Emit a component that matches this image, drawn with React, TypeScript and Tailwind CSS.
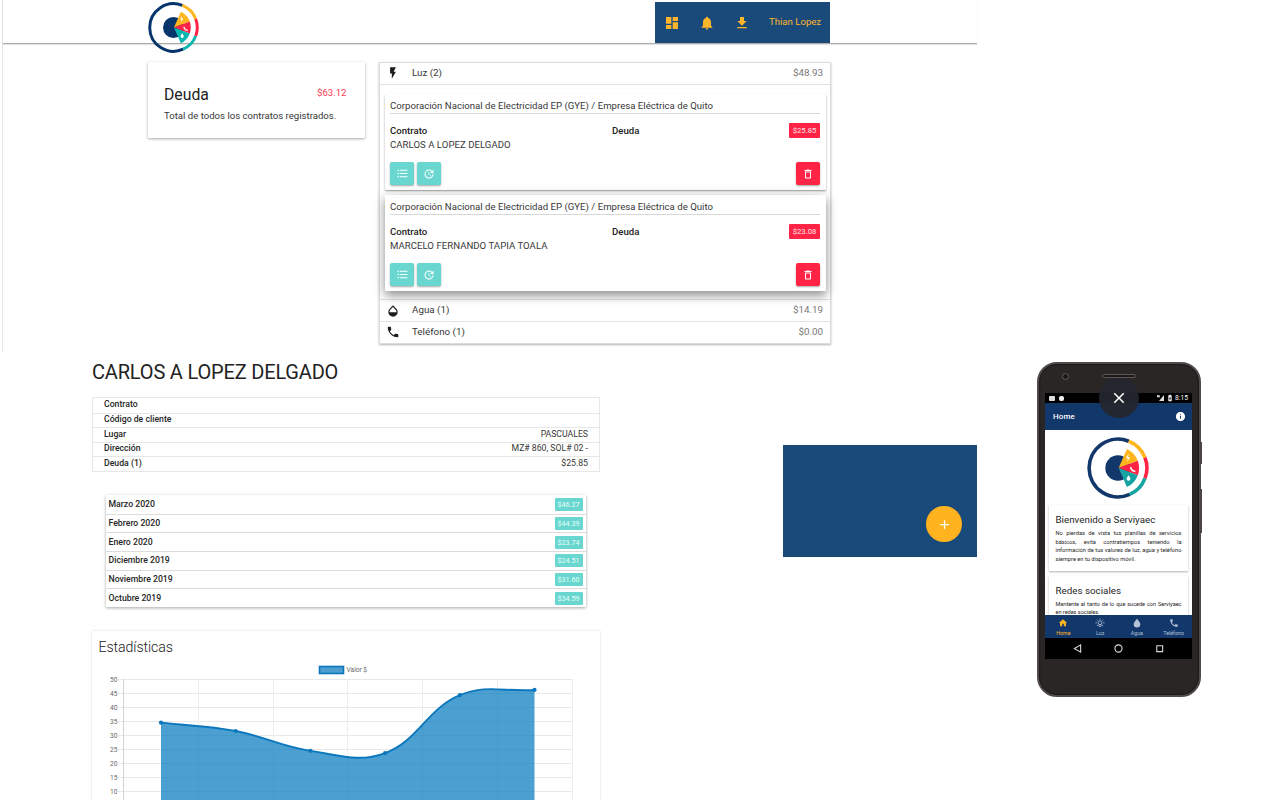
import React from "react";
import {
  MdAdd,
  MdBatteryChargingFull,
  MdClose,
  MdDashboard,
  MdDeleteOutline,
  MdFileDownload,
  MdFlashOn,
  MdFormatListBulleted,
  MdHome,
  MdInfo,
  MdNotifications,
  MdOpacity,
  MdPhone,
  MdUpdate,
} from "react-icons/md";

function polar(r: number, deg: number) {
  const a = (deg * Math.PI) / 180;
  return `${(50 + r * Math.cos(a)).toFixed(2)} ${(50 + r * Math.sin(a)).toFixed(2)}`;
}
const arc = (r: number, a: number, b: number, large = 0) =>
  `M${polar(r, a)}A${r} ${r} 0 ${large} 1 ${polar(r, b)}`;
const wedge = (r: number, a: number, b: number) =>
  `M51 50L${polar(r, a)}A${r} ${r} 0 0 1 ${polar(r, b)}Z`;

function Logo({ className, navy, teal }: { className: string; navy: string; teal: string }) {
  return (
    <svg viewBox="0 0 100 100" className={className} fill="none">
      <g strokeWidth="5.8">
        <path d={arc(46.6, 66, 292, 1)} stroke={navy} />
        <path d={arc(46.6, -68, -21)} stroke="#ffb61e" />
        <path d={arc(46.6, -21, 21)} stroke="#ff2445" />
        <path d={arc(46.6, 21, 66)} stroke={teal} />
      </g>
      <circle cx="50" cy="50" r="20.5" fill={navy} />
      <path d={wedge(34, -65, -20)} fill="#ffb61e" />
      <path d={wedge(34, -20, 20)} fill="#ff2445" />
      <path d={wedge(34, 20, 65)} fill={teal} />
      <path d="M67 27l-4 7 3 .5-1.500 5.500 5-7-3.300-.6z" fill="#fff" />
      <path d="M70.500 48.500c.5 4 3 6.500 7.500 7" stroke="#fff" strokeWidth="2.600" />
      <path d="M67 61.500c2 3 3 4.200 3 6a3 3 0 0 1-6 0c0-1.800 1-3 3-6z" fill="#fff" />
    </svg>
  );
}

function Contract({ name, debt, raised }: { name: string; debt: string; raised?: boolean }) {
  return (
    <div
      className={
        "h-[96px] rounded-[1px] bg-white pl-[5px] pr-[6px] " +
        (raised
          ? "shadow-[0_5px_9px_rgba(0,0,0,0.3),0_2px_14px_rgba(0,0,0,0.2)]"
          : "shadow-[0_1px_2px_rgba(0,0,0,0.42)]")
      }
    >
      <div className="h-[20px] border-b border-[#d8d8d8] pt-[5px] text-[9.6px] leading-[14px] tracking-[0.015px] text-[#383838] whitespace-nowrap">
        Corporación Nacional de Electricidad EP (GYE) / Empresa Eléctrica de Quito
      </div>
      <div className="mt-[9px] flex h-[29px] text-[9.6px] leading-[14px]">
        <div className="w-[222px] pt-px whitespace-nowrap text-[#383838]">
          <div className="font-medium text-[#222]">Contrato</div>
          <div className="tracking-[0.03px]">{name}</div>
        </div>
        <div className="pt-px font-medium text-[#222]">Deuda</div>
        <div className="ml-auto h-[15px] w-[31px] rounded-[1px] bg-[#ff2445] text-center text-[7.7px] leading-[15px] text-[#ffe3e6]">
          {debt}
        </div>
      </div>
      <div className="mt-[10px] flex gap-[3px] text-white">
        <span className="grid h-[23px] w-[24px] place-items-center rounded-[2px] bg-[#69d6cf] shadow-[0_1px_2px_rgba(0,0,0,0.35)]">
          <MdFormatListBulleted size={13} />
        </span>
        <span className="grid h-[23px] w-[24px] place-items-center rounded-[2px] bg-[#69d6cf] shadow-[0_1px_2px_rgba(0,0,0,0.35)]">
          <MdUpdate size={12} />
        </span>
        <span className="ml-auto grid h-[23px] w-[24px] place-items-center rounded-[2px] bg-[#ff2445] shadow-[0_1px_2px_rgba(0,0,0,0.35)]">
          <MdDeleteOutline size={12} />
        </span>
      </div>
    </div>
  );
}

function CategoryRow({
  icon,
  label,
  total,
  height,
}: {
  icon: React.ReactNode;
  label: string;
  total: string;
  height: string;
}) {
  return (
    <div className={"flex items-center bg-white pl-[6px] pr-[7px] text-[9.8px] text-[#383838] " + height}>
      <span className="w-[26px] text-[#1d1d1d]">{icon}</span>
      <span>{label}</span>
      <span className="ml-auto text-[#777]">{total}</span>
    </div>
  );
}

function Dashboard() {
  return (
    <section className="ml-[2px] h-[352px] w-[975px] shrink-0 border-l border-[#e6e6e6]">
      <header className="flex h-[44px] items-start border-b border-[#ababab] pl-[145px] pr-[147px] shadow-[0_1px_1px_rgba(0,0,0,0.1)]">
        <Logo className="ml-[0.4px] mt-[2px] h-[51px] w-[51px] shrink-0" navy="#05356b" teal="#08b8b0" />
        <nav className="ml-auto mt-[2px] flex h-[41px] w-[175px] items-center bg-[#1a4a7a] pl-[9px] text-[#ffb52a]">
          <span className="w-[35px]"><MdDashboard size={16} /></span>
          <span className="w-[35px]"><MdNotifications size={16} /></span>
          <span className="w-[35px]"><MdFileDownload size={16} /></span>
          <span className="whitespace-nowrap text-[9.6px]">Thian Lopez</span>
        </nav>
      </header>
      <div className="flex items-start gap-[14px] pl-[145px] pt-[18px]">
        <div className="h-[76px] w-[217px] rounded-[1px] bg-white px-[16px] pt-[22px] shadow-[0_1px_3px_rgba(0,0,0,0.35)]">
          <div className="flex justify-between">
            <span className="pt-px text-[15.8px] leading-[20px] text-[#222]">Deuda</span>
            <span className="mr-[2.500px] text-[9.6px] leading-[18px] text-[#ff3b56]">$63.12</span>
          </div>
          <p className="mt-[3px] whitespace-nowrap text-[9.6px] leading-[16px] text-[#383838]">
            Total de todos los contratos registrados.
          </p>
        </div>
        <div className="h-[282px] w-[452px] border border-[#dcdcdc] bg-white shadow-[0_1px_2px_rgba(0,0,0,0.3)]">
          <CategoryRow height="h-[21px] pb-px" icon={<MdFlashOn size={14} />} label="Luz (2)" total="$48.93" />
          <div className="flex h-[216px] flex-col gap-[5px] border-y border-[#e2e2e2] pl-[5px] pr-[4px] pt-[9px]">
            <Contract name="CARLOS A LOPEZ DELGADO" debt="$25.85" />
            <Contract name="MARCELO FERNANDO TAPIA TOALA" debt="$23.08" raised />
          </div>
          <CategoryRow height="h-[21px]" icon={<MdOpacity size={14} />} label="Agua (1)" total="$14.19" />
          <div className="border-t border-[#e2e2e2]">
            <CategoryRow height="h-[20px]" icon={<MdPhone size={14} />} label="Teléfono (1)" total="$0.00" />
          </div>
        </div>
      </div>
    </section>
  );
}

const DETAILS = [
  ["Contrato", ""],
  ["Código de cliente", ""],
  ["Lugar", "PASCUALES"],
  ["Dirección", "MZ# 860, SOL# 02 -"],
  ["Deuda (1)", "$25.85"],
];

const MONTHS = [
  ["Marzo 2020", "$46.27"],
  ["Febrero 2020", "$44.39"],
  ["Enero 2020", "$23.74"],
  ["Diciembre 2019", "$24.51"],
  ["Noviembre 2019", "$31.60"],
  ["Octubre 2019", "$34.59"],
];

const VALUES = [34.59, 31.6, 24.51, 23.74, 44.39, 46.27];
const POINTS = VALUES.map((v, i) => ({ x: 69 + i * 74.7, y: 48.5 + (50 - v) * 2.8 }));

function curve(points: { x: number; y: number }[], tension: number) {
  const controls = points.map((p, i) => {
    const prev = points[i - 1] ?? p;
    const next = points[i + 1] ?? p;
    const d1 = Math.hypot(p.x - prev.x, p.y - prev.y);
    const d2 = Math.hypot(next.x - p.x, next.y - p.y);
    const f1 = (tension * d1) / (d1 + d2);
    const f2 = (tension * d2) / (d1 + d2);
    const dx = next.x - prev.x;
    const dy = next.y - prev.y;
    return { ax: p.x - f1 * dx, ay: p.y - f1 * dy, bx: p.x + f2 * dx, by: p.y + f2 * dy };
  });
  return points
    .map((p, i) =>
      i === 0
        ? `M${p.x} ${p.y}`
        : `C${controls[i - 1].bx} ${controls[i - 1].by} ${controls[i].ax} ${controls[i].ay} ${p.x} ${p.y}`
    )
    .join("");
}

function Chart() {
  const line = curve(POINTS, 0.4);
  const ticks = [50, 45, 40, 35, 30, 25, 20, 15, 10];
  return (
    <svg width="508" height="190" viewBox="0 0 508 190" className="block">
      {ticks.map((t, i) => (
        <g key={t}>
          <path d={`M26 ${48.5 + i * 14}H480`} stroke="#e9e9e9" />
          <text x="25.500" y={50.8 + i * 14} textAnchor="end" fontSize="6.6" fill="#666">{t}</text>
        </g>
      ))}
      {[0, 1, 2, 3, 4, 5, 6].map((i) => (
        <path key={i} d={`M${Math.round(31 + i * 74.8) + 0.5} 48V190`} stroke={i ? "#eeeeee" : "#d2d2d2"} />
      ))}
      <path d={`${line}V190H${POINTS[0].x}Z`} fill="#0076bd" fillOpacity="0.7" />
      <path d={line} fill="none" stroke="#0c77bd" strokeWidth="1.900" />
      {POINTS.map((p) => (
        <circle key={p.x} cx={p.x} cy={p.y} r="2.100" fill="#0c77bd" />
      ))}
      <rect x="227.500" y="35.500" width="24" height="7" fill="#4b9ecf" stroke="#0c77bd" strokeWidth="1.600" />
      <text x="254.500" y="41" fontSize="6.600" fill="#666">Valor $</text>
    </svg>
  );
}

function ContractDetail() {
  return (
    <section className="w-[508px] pt-[7px]">
      <h1 className="h-[38px] whitespace-nowrap text-[20px] leading-[27px] tracking-[-0.18px] text-[#222]">
        CARLOS A LOPEZ DELGADO
      </h1>
      <dl className="border border-[#e7e7e7] text-[8.7px] text-[#383838]">
        {DETAILS.map(([k, v], i) => (
          <div
            key={k}
            className={
              "flex h-[14.5px] items-center justify-between pb-[0.6px] pl-[11px] pr-[11px] " +
              (i ? "border-t border-[#e7e7e7]" : "")
            }
          >
            <dt className="font-medium text-[#262626]">{k}</dt>
            <dd>{v}</dd>
          </div>
        ))}
      </dl>
      <ul className="ml-[13.500px] mt-[23.500px] w-[480px] bg-white shadow-[0_1px_3px_rgba(0,0,0,0.35)]">
        {MONTHS.map(([m, v], i) => (
          <li
            key={m}
            className={
              "flex h-[18.7px] items-center justify-between pl-[3px] pr-[3px] " +
              (i ? "border-t border-[#dcdcdc]" : "")
            }
          >
            <span className="text-[8.7px] font-medium text-[#262626]">{m}</span>
            <span className="h-[13px] w-[28px] rounded-[1px] bg-[#69d6cf] text-center text-[7.2px] leading-[13px] text-[#e4fffb]">
              {v}
            </span>
          </li>
        ))}
      </ul>
      <div className="relative mt-[23.800px] h-[190px] bg-white shadow-[0_0_2px_rgba(0,0,0,0.18)]">
        <h2 className="absolute left-[6.500px] top-[7px] text-[14.2px] font-light leading-[18px] tracking-[-0.1px] text-[#222]">
          Estadísticas
        </h2>
        <Chart />
      </div>
    </section>
  );
}

function Tab({ icon, label, active }: { icon: React.ReactNode; label: string; active?: boolean }) {
  return (
    <div
      className={
        "flex flex-1 flex-col items-center pt-[3px] text-[5.3px] leading-[8px] " +
        (active ? "text-[#ffb61e]" : "text-[#b4c3d8]")
      }
    >
      {icon}
      <span className="mt-px">{label}</span>
    </div>
  );
}

function Phone() {
  return (
    <div className="relative ml-[60px] mt-[10px] h-[335px] w-[164px] rounded-[20px] border-2 border-[#51494a] bg-[#292625] pl-[6px] pt-[29px] shadow-[inset_0_0_2px_#000]">
      <span className="absolute left-[23px] top-[9px] h-[7px] w-[7px] rounded-full border border-[#625d5c] bg-[#1a1918]" />
      <span className="absolute left-[63px] top-[10px] h-[4px] w-[34px] rounded-full border border-[#5b5655] bg-[#1d1b1a]" />
      <span className="absolute -right-[3px] top-[78px] h-[22px] w-[2px] bg-[#4c4546]" />
      <span className="absolute -right-[3px] top-[125px] h-[44px] w-[2px] bg-[#4c4546]" />
      <div className="flex h-[266px] w-[147px] flex-col overflow-hidden bg-white">
        <div className="flex h-[10px] shrink-0 items-center bg-black px-[4px] text-[6.7px] text-white">
          <span className="h-[5px] w-[6px] rounded-[1px] bg-[#ddd]" />
          <span className="ml-[4px] h-[5px] w-[5px] rounded-[2px] bg-[#eee]" />
          <svg viewBox="0 0 8 6" className="ml-auto h-[6px] w-[8px]"><path d="M8 0v6H3zM1 0l3 .5-.5 2L1 2z" fill="#ddd" /></svg>
          <MdBatteryChargingFull size={8} className="ml-[2px]" />
          <span className="ml-[1px]">8:15</span>
        </div>
        <div className="flex h-[27px] shrink-0 items-center justify-between bg-[#12376b] pl-[8px] pr-[6px] text-white">
          <span className="text-[8px] font-medium tracking-[0.1px]">Home</span>
          <MdInfo size={11} />
        </div>
        <div className="h-[185px] shrink-0 overflow-hidden bg-white px-[4px] pt-[7px] text-[#262626]">
          <Logo className="ml-[38px] block h-[62px] w-[62px]" navy="#12376b" teal="#16a3a4" />
          <div className="mt-[6px] h-[66px] px-[6.500px] pt-[9px] shadow-[0_1px_2px_rgba(0,0,0,0.3)]">
            <h3 className="text-[9.8px] leading-[12px]">Bienvenido a Serviyaec</h3>
            <p className="mt-[3px] text-justify text-[5.7px] leading-[8.6px]">
              No pierdas de vista tus planillas de servicios básicos, evita contratiempos teniendo la información de tus valores de luz, agua y teléfono siempre en tu dispositivo móvil.
            </p>
          </div>
          <div className="mt-[5px] h-[67px] px-[6.500px] pt-[8.500px] shadow-[0_1px_2px_rgba(0,0,0,0.3)]">
            <h3 className="text-[9.8px] leading-[12px]">Redes sociales</h3>
            <p className="mt-[3px] text-justify text-[5.6px] leading-[8.6px] tracking-[-0.04px]">
              Mantente al tanto de lo que sucede con Serviyaec en redes sociales.
            </p>
          </div>
        </div>
        <div className="flex h-[23px] shrink-0 bg-[#12376b]">
          <Tab active icon={<MdHome size={10} />} label="Home" />
          <Tab
            icon={
              <svg viewBox="0 0 24 24" className="h-[10px] w-[10px]" fill="none" stroke="currentColor" strokeWidth="2">
                <circle cx="12" cy="11.500" r="4.500" />
                <path d="M9.500 16v4h5v-4M12 1v3M1 11.500h3.500M19.500 11.500H23M4.500 4l2.500 2.500M19.500 4L17 6.500M4.500 19L7 16.500M19.500 19L17 16.500" />
              </svg>
            }
            label="Luz"
          />
          <Tab
            icon={
              <svg viewBox="0 0 24 24" className="h-[10px] w-[10px]" fill="currentColor">
                <path d="M12 1.500C8 7 4 11 4 15a8 8 0 0 0 16 0c0-4-4-8-8-13.500z" />
              </svg>
            }
            label="Agua"
          />
          <Tab icon={<MdPhone size={10} />} label="Teléfono" />
        </div>
        <div className="flex h-[21px] shrink-0 items-center justify-between bg-black pl-[28px] pr-[28px]">
          <svg viewBox="0 0 10 10" className="h-[9px] w-[9px]" fill="none" stroke="#ddd" strokeWidth="1.200"><path d="M8.500 1v8L1.500 5z" /></svg>
          <svg viewBox="0 0 10 10" className="h-[9px] w-[9px]" fill="none" stroke="#ddd" strokeWidth="1.200"><circle cx="5" cy="5" r="4" /></svg>
          <svg viewBox="0 0 10 10" className="h-[9px] w-[9px]" fill="none" stroke="#ddd" strokeWidth="1.200"><path d="M2 2h6.500v6.500H2z" /></svg>
        </div>
      </div>
      <span className="absolute left-[60px] top-[14px] grid h-[40px] w-[40px] place-items-center rounded-full bg-[#24262f]/95 text-white">
        <MdClose size={18} />
      </span>
    </div>
  );
}

export default function App() {
  return (
    <main className="flex h-[800px] w-[1280px] flex-col overflow-hidden bg-white font-['Roboto','Liberation_Sans',sans-serif]">
      <Dashboard />
      <div className="flex h-[448px] items-start pl-[92px]">
        <ContractDetail />
        <div className="ml-[183px] mt-[93px] flex h-[112px] w-[194px] items-end justify-end bg-[#1a4a7a] pb-[15px] pr-[15px]">
          <button className="grid h-[36px] w-[36px] place-items-center rounded-full bg-[#ffb41f] text-white">
            <MdAdd size={15} />
          </button>
        </div>
        <Phone />
      </div>
    </main>
  );
}
